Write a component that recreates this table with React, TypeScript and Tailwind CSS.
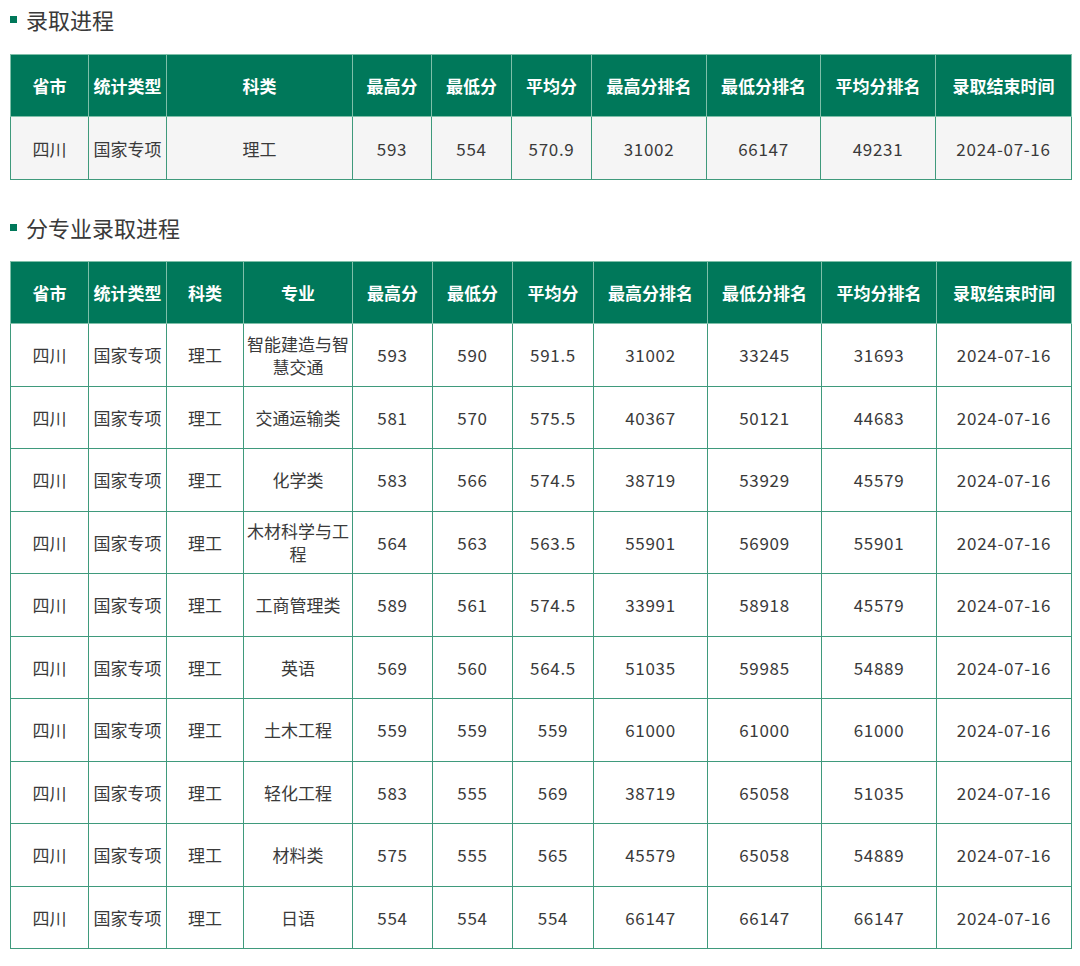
const font = "font-['Microsoft_YaHei','Noto_Sans_CJK_SC',sans-serif]";

const overall = {
  widths: [78, 78, 186, 79, 80, 80, 115, 114, 115, 136],
  head: ["省市", "统计类型", "科类", "最高分", "最低分", "平均分", "最高分排名", "最低分排名", "平均分排名", "录取结束时间"],
  rows: [["四川", "国家专项", "理工", "593", "554", "570.9", "31002", "66147", "49231", "2024-07-16"]],
};

const majors = {
  widths: [78, 78, 77, 109, 80, 80, 81, 114, 114, 115, 135],
  head: ["省市", "统计类型", "科类", "专业", "最高分", "最低分", "平均分", "最高分排名", "最低分排名", "平均分排名", "录取结束时间"],
  rows: [
    ["智能建造与智慧交通", "593", "590", "591.5", "31002", "33245", "31693"],
    ["交通运输类", "581", "570", "575.5", "40367", "50121", "44683"],
    ["化学类", "583", "566", "574.5", "38719", "53929", "45579"],
    ["木材科学与工程", "564", "563", "563.5", "55901", "56909", "55901"],
    ["工商管理类", "589", "561", "574.5", "33991", "58918", "45579"],
    ["英语", "569", "560", "564.5", "51035", "59985", "54889"],
    ["土木工程", "559", "559", "559", "61000", "61000", "61000"],
    ["轻化工程", "583", "555", "569", "38719", "65058", "51035"],
    ["材料类", "575", "555", "565", "45579", "65058", "54889"],
    ["日语", "554", "554", "554", "66147", "66147", "66147"],
  ].map((r) => ["四川", "国家专项", "理工", ...r, "2024-07-16"]),
};

const isNumber = (s: string) => /^[\d.-]+$/.test(s);

function Title({ text }: { text: string }) {
  return (
    <div className="flex h-[32px] items-center gap-[9px]">
      <span className="h-[7px] w-[7px] bg-[#00785a]" />
      <span className="text-[22px] leading-[32px] text-[#3a3a3a]">{text}</span>
    </div>
  );
}

function DataTable({
  widths,
  head,
  rows,
  shaded,
}: {
  widths: number[];
  head: string[];
  rows: string[][];
  shaded?: boolean;
}) {
  return (
    <table className="w-[1061px] table-fixed border-collapse border border-[#00785a]">
      <colgroup>
        {widths.map((w, i) => (
          <col key={i} style={{ width: w }} />
        ))}
      </colgroup>
      <thead>
        <tr className="h-[62px] bg-[#00785a]">
          {head.map((h) => (
            <th
              key={h}
              className="border border-[#7fbfa9] px-[2px] text-[17px] font-bold leading-[23px] text-white"
            >
              {h}
            </th>
          ))}
        </tr>
      </thead>
      <tbody>
        {rows.map((r, i) => (
          <tr key={i} className={shaded ? "h-[63px] bg-[#f5f5f5]" : "h-[62.5px] bg-white"}>
            {r.map((c, j) => (
              <td
                key={j}
                className={`border border-[#3f9a7c] px-[2px] text-center text-[17px] leading-[23px] text-[#3a3a3a] ${
                  isNumber(c) ? "tracking-[0.7px]" : ""
                }`}
              >
                {c}
              </td>
            ))}
          </tr>
        ))}
      </tbody>
    </table>
  );
}

export default function App() {
  return (
    <div className={`${font} min-h-[966px] bg-white px-[10px] pt-[3px]`}>
      <Title text="录取进程" />
      <div className="mt-[19px]">
        <DataTable {...overall} shaded />
      </div>
      <div className="mt-[31px]">
        <Title text="分专业录取进程" />
      </div>
      <div className="mt-[18px]">
        <DataTable {...majors} />
      </div>
    </div>
  );
}
